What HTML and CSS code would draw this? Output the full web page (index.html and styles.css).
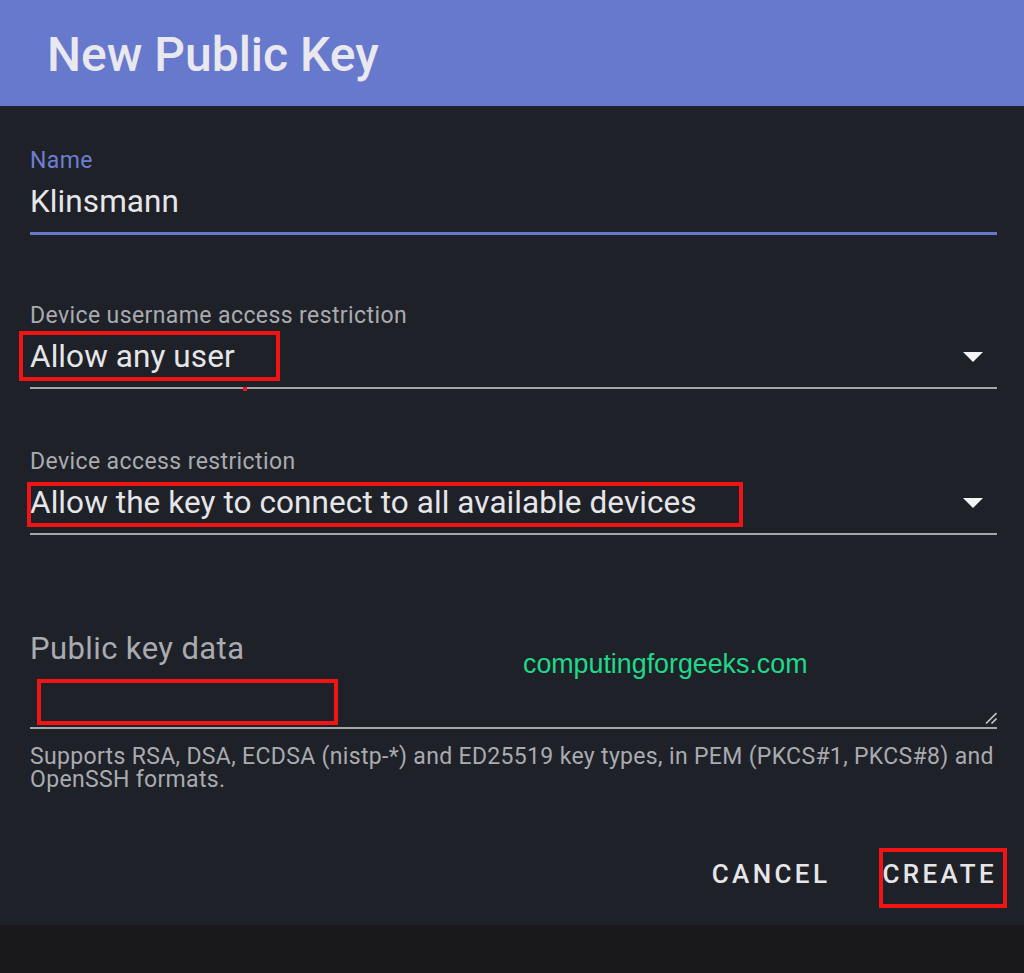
FILE: index.html
```html
<!DOCTYPE html>
<html lang="en">
<head>
<meta charset="utf-8">
<title>New Public Key</title>
<link rel="stylesheet" href="styles.css">
</head>
<body>
<div class="dialog">
  <header class="dialog-header">
    <h1>New Public Key</h1>
  </header>
  <div class="dialog-body">
    <div class="field field-name">
      <div class="label">Name</div>
      <div class="value-row"><span class="value">Klinsmann</span></div>
    </div>

    <div class="field field-user">
      <div class="label">Device username access restriction</div>
      <div class="value-row"><span class="value">Allow any user</span><span class="arrow"></span></div>
      <span class="annot annot-user"></span>
      <span class="annot-dot"></span>
    </div>

    <div class="field field-device">
      <div class="label">Device access restriction</div>
      <div class="value-row"><span class="value">Allow the key to connect to all available devices</span><span class="arrow"></span></div>
      <span class="annot annot-device"></span>
    </div>

    <div class="field-textarea">
      <div class="placeholder">Public key data</div>
      <div class="textarea-space"></div>
      <svg class="resize" width="12" height="12" viewBox="0 0 12 12"><path d="M1 11.5 L11.5 1 M6.5 11.5 L11.5 6.5" stroke="#c4c5c8" stroke-width="1.6" fill="none"/></svg>
      <span class="annot annot-key"></span>
      <span class="watermark">computingforgeeks.com</span>
    </div>

    <p class="helper">Supports RSA, DSA, ECDSA (nistp-*) and ED25519 key types, in PEM (PKCS#1, PKCS#8) and OpenSSH formats.</p>

    <div class="actions">
      <button class="btn">CANCEL</button>
      <button class="btn btn-create">CREATE<span class="annot annot-create"></span></button>
    </div>
  </div>
</div>
</body>
</html>
```

FILE: styles.css
```css
body {
  margin: 0;
  background: #19191b;
  font-family: Roboto, "Noto Sans", sans-serif;
}

.dialog {
  width: 1024px;
  background: #1f2128;
}

.dialog-header {
  height: 106px;
  box-sizing: border-box;
  padding: 31px 0 0 47px;
  background: #6679cc;
}

.dialog-header h1 {
  margin: 0;
  font-size: 48px;
  line-height: 48px;
  font-weight: 500;
  color: #e8e8ee;
}

.dialog-body {
  padding: 43.5px 27px 38px 30px;
}

.field {
  position: relative;
}

.label {
  font-size: 23px;
  line-height: 22px;
  letter-spacing: 0.4px;
  color: #a9abb0;
}

.field-name .label {
  color: #6e7ed2;
}

.value-row {
  display: flex;
  justify-content: space-between;
  align-items: flex-start;
  margin-top: 14px;
  padding-bottom: 14.5px;
  border-bottom: 2px solid #a4a6aa;
}

.field-name {
  margin-bottom: 70px;
}

.field-name .value-row {
  border-bottom: 3px solid #6679cc;
}

.field-user {
  margin-bottom: 62px;
}

.value {
  font-size: 31.5px;
  line-height: 31.5px;
  letter-spacing: 0.08px;
  color: #e6e6e8;
}

.arrow {
  width: 0;
  height: 0;
  border-left: 10px solid transparent;
  border-right: 10px solid transparent;
  border-top: 10px solid #f4f4f4;
  margin: 11.5px 14px 0 0;
}

.annot {
  position: absolute;
  box-sizing: border-box;
  border: 4px solid #f01414;
  pointer-events: none;
}

.annot-user {
  left: -11px;
  top: 26.5px;
  width: 261px;
  height: 50px;
}

.annot-dot {
  position: absolute;
  left: 213px;
  top: 82px;
  width: 4px;
  height: 4px;
  background: #f01414;
}

.annot-device {
  left: -3px;
  top: 31.5px;
  width: 716px;
  height: 45px;
}

.field-textarea {
  position: relative;
  padding-top: 99.2px;
  border-bottom: 2px solid #a4a6aa;
}

.placeholder {
  font-size: 31px;
  line-height: 30px;
  letter-spacing: 0.4px;
  color: #a9abb0;
}

.textarea-space {
  height: 63.8px;
}

.resize {
  position: absolute;
  right: 0;
  bottom: 3px;
}

.annot-key {
  left: 7px;
  top: 144.5px;
  width: 301px;
  height: 46px;
}

.watermark {
  position: absolute;
  left: 493px;
  top: 116px;
  font-family: "Liberation Sans", Arial, sans-serif;
  font-size: 26.8px;
  line-height: 26px;
  color: #1fd98b;
}

.helper {
  margin: 15.5px 0 0;
  font-size: 23px;
  line-height: 23px;
  letter-spacing: 0.33px;
  color: #a9abb0;
}

.actions {
  display: flex;
  justify-content: flex-end;
  gap: 52px;
  margin-top: 70px;
}

.btn {
  position: relative;
  background: none;
  border: 0;
  padding: 0;
  font-family: Roboto, "Noto Sans", sans-serif;
  font-size: 26px;
  line-height: 26px;
  font-weight: 500;
  letter-spacing: 3.4px;
  color: #e6e6e8;
}

.annot-create {
  left: -3px;
  top: -13px;
  width: 128px;
  height: 60px;
}
```
